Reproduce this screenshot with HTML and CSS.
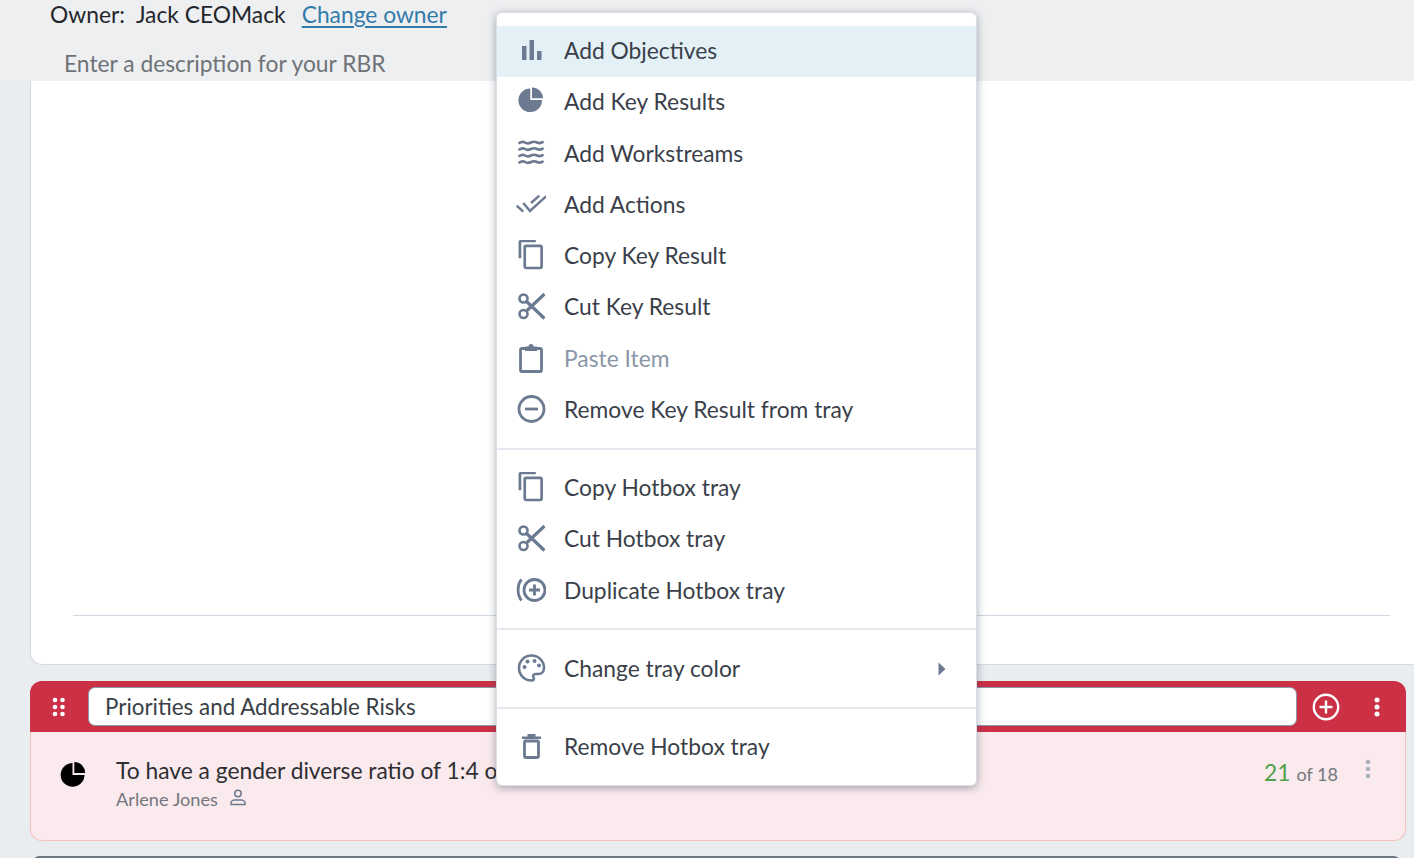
FILE: index.html
```html
<!DOCTYPE html>
<html lang="en">
<head>
<meta charset="utf-8">
<title>RBR</title>
<link rel="stylesheet" href="styles.css">
</head>
<body>
<svg class="defs" width="0" height="0" aria-hidden="true">
  <symbol id="i-copy" viewBox="0 0 28 32"><path d="M2.5 20V3.5a1.5 1.5 0 0 1 1.500-1.500H19" fill="none" stroke="currentColor" stroke-width="2.800"/><rect x="7.500" y="7" width="17.500" height="23" rx="1.500" fill="none" stroke="currentColor" stroke-width="2.800"/></symbol>
  <symbol id="i-cut" viewBox="0 0 28 28"><circle cx="6" cy="6.500" r="4" fill="none" stroke="currentColor" stroke-width="2.600"/><circle cx="6" cy="22" r="4" fill="none" stroke="currentColor" stroke-width="2.600"/><path d="M9 9.500 27 26.500M9 19 27 2" fill="none" stroke="currentColor" stroke-width="3.200"/></symbol>
</svg>

<header class="top">
  <div class="owner"><span>Owner:&nbsp; Jack CEOMack</span><a class="owner-link" href="#">Change owner</a></div>
  <div class="desc-label">Enter a description for your RBR</div>
</header>

<section class="panel"><div class="panel-rule"></div></section>

<section class="tray">
  <div class="tray-head">
    <svg class="grip" width="14" height="22" viewBox="0 0 14 22"><g fill="#fff"><circle cx="3" cy="4" r="2.300"/><circle cx="10.500" cy="4" r="2.300"/><circle cx="3" cy="11" r="2.300"/><circle cx="10.500" cy="11" r="2.300"/><circle cx="3" cy="18" r="2.300"/><circle cx="10.500" cy="18" r="2.300"/></g></svg>
    <div class="tray-input">Priorities and Addressable Risks</div>
    <svg class="tray-add" width="28" height="28" viewBox="0 0 28 28"><circle cx="14" cy="14" r="12.200" fill="none" stroke="#fff" stroke-width="2.400"/><path d="M14 7.500v13M7.500 14h13" stroke="#fff" stroke-width="2.400"/></svg>
    <svg class="tray-more" width="8" height="22" viewBox="0 0 8 22"><g fill="#fff"><circle cx="4" cy="4" r="2.500"/><circle cx="4" cy="11" r="2.500"/><circle cx="4" cy="18" r="2.500"/></g></svg>
  </div>
  <div class="tray-body">
    <svg class="kr-icon" width="26" height="26" viewBox="0 0 26 26"><path d="M12.500 2v12h12A11.900 11.900 0 1 1 12.500 2Z" fill="#000"/><path d="M14.300 1a10.800 10.800 0 0 1 10.800 11H14.300Z" fill="#000"/></svg>
    <div class="kr-text">
      <div class="kr-title">To have a gender diverse ratio of 1:4 or better</div>
      <div class="kr-owner"><span>Arlene Jones</span>
        <svg width="16" height="17" viewBox="0 0 16 17"><circle cx="8" cy="4.500" r="3.200" fill="none" stroke="#6b7a90" stroke-width="1.500"/><path d="M1 15.500v-1.500c0-2 2-3 3.500-3h7c1.500 0 3.500 1 3.500 3v1.500Z" fill="none" stroke="#6b7a90" stroke-width="1.500"/></svg>
      </div>
    </div>
    <div class="kr-score"><span class="kr-num">21</span><span class="kr-of">of 18</span></div>
    <svg class="kr-more" width="8" height="22" viewBox="0 0 8 22"><g fill="#a7b2bc"><circle cx="4" cy="4" r="2.300"/><circle cx="4" cy="11" r="2.300"/><circle cx="4" cy="18" r="2.300"/></g></svg>
  </div>
</section>
<div class="next-tray"></div>

<nav class="menu">
  <div class="menu-group">
    <div class="menu-item is-active"><svg class="mi" viewBox="0 0 30 30"><path d="M6 11h4.500v14H6zM13.500 5H18v20h-4.500zM21 16h4.500v9H21z" fill="currentColor"/></svg><span>Add Objectives</span></div>
    <div class="menu-item"><svg class="mi" viewBox="0 0 30 30"><path d="M14.300 2.500V14H26A11.800 11.800 0 1 1 14.300 2.500Z" fill="currentColor"/><path d="M16 1.500A11 11 0 0 1 27 12.200H16Z" fill="currentColor"/></svg><span>Add Key Results</span></div>
    <div class="menu-item"><svg class="mi" viewBox="0 0 30 30"><path d="M2.500 5.500c3-2 5-2 6.500-1s4 1 6 0 4-1 6 0 4 1 6.500-1M2.500 12c3-2 5-2 6.500-1s4 1 6 0 4-1 6 0 4 1 6.500-1M2.500 18.500c3-2 5-2 6.500-1s4 1 6 0 4-1 6 0 4 1 6.500-1M2.500 25c3-2 5-2 6.500-1s4 1 6 0 4-1 6 0 4 1 6.500-1" fill="none" stroke="currentColor" stroke-width="2.600"/></svg><span>Add Workstreams</span></div>
    <div class="menu-item"><svg class="mi" viewBox="0 0 30 30"><path d="M0.700 16.700 7.300 22.700M7.300 14 14 22 30 7.300M15 14 23.300 6.700" fill="none" stroke="currentColor" stroke-width="2.400"/></svg><span>Add Actions</span></div>
    <div class="menu-item"><svg class="mi" viewBox="0 0 30 30"><use href="#i-copy" x="1.500" y="-1" width="27" height="31"/></svg><span>Copy Key Result</span></div>
    <div class="menu-item"><svg class="mi" viewBox="0 0 30 30"><use href="#i-cut" x="1.500" y="1" width="28" height="28"/></svg><span>Cut Key Result</span></div>
    <div class="menu-item is-disabled"><svg class="mi" viewBox="0 0 30 30"><path d="M9 5.500H6a1.500 1.500 0 0 0-1.500 1.500v20A1.500 1.500 0 0 0 6 28.500h18a1.500 1.500 0 0 0 1.500-1.500V7A1.500 1.500 0 0 0 24 5.500h-3" fill="none" stroke="#6b7a90" stroke-width="2.800"/><path d="M9 3.500h3.500a2.500 2.500 0 0 1 5 0H21V8H9Z" fill="#6b7a90"/></svg><span>Paste Item</span></div>
    <div class="menu-item"><svg class="mi" viewBox="0 0 30 30"><circle cx="15.500" cy="15" r="12.500" fill="none" stroke="currentColor" stroke-width="2.800"/><path d="M9 15h13" stroke="currentColor" stroke-width="2.800"/></svg><span>Remove Key Result from tray</span></div>
  </div>
  <div class="menu-group menu-group-mid">
    <div class="menu-item"><svg class="mi" viewBox="0 0 30 30"><use href="#i-copy" x="1.500" y="-1" width="27" height="31"/></svg><span>Copy Hotbox tray</span></div>
    <div class="menu-item"><svg class="mi" viewBox="0 0 30 30"><use href="#i-cut" x="1.500" y="1" width="28" height="28"/></svg><span>Cut Hotbox tray</span></div>
    <div class="menu-item"><svg class="mi" viewBox="0 0 30 30"><path d="M5.500 4.500C1 10 1 20 5.500 25.500" fill="none" stroke="currentColor" stroke-width="2.800"/><circle cx="18.500" cy="15" r="10.500" fill="none" stroke="currentColor" stroke-width="2.800"/><path d="M18.500 9.500v11M13 15h11" stroke="currentColor" stroke-width="2.800"/></svg><span>Duplicate Hotbox tray</span></div>
  </div>
  <div class="menu-group menu-group-color">
    <div class="menu-item"><svg class="mi" viewBox="0 0 30 30"><path d="M15.500 2.500C8.500 2.500 3 8 3 15s5.500 12.500 12.500 12.500c2.500 0 2.800-2 2-3.200-1-1.600 0-3.300 2-3.300h3c3 0 5.500-2.500 5.500-6C28 8 22.500 2.500 15.500 2.500Z" fill="none" stroke="currentColor" stroke-width="2.600"/><g fill="currentColor"><circle cx="8.500" cy="14" r="2"/><circle cx="11.500" cy="8.500" r="2"/><circle cx="18.500" cy="8" r="2"/><circle cx="23" cy="12.500" r="2"/></g></svg><span class="menu-label">Change tray color</span><svg class="caret" width="8" height="14" viewBox="0 0 8 14"><path d="M0.500 0.500 7.500 7 0.500 13.500Z" fill="#6b7a90"/></svg></div>
  </div>
  <div class="menu-group">
    <div class="menu-item"><svg class="mi" viewBox="0 0 30 30"><path d="M6 5.500h19v2.500H6zM11.500 3h8v2.500h-8z" fill="currentColor"/><rect x="8.500" y="10" width="14" height="16.500" rx="1" fill="none" stroke="currentColor" stroke-width="2.800"/></svg><span>Remove Hotbox tray</span></div>
  </div>
</nav>
</body>
</html>
```

FILE: styles.css
```css
* { box-sizing: border-box; }
html, body { margin: 0; height: 858px; overflow: hidden; }
body {
  position: relative;
  width: 1414px;
  background: #e9edf0;
  font-family: Lato, "Open Sans", sans-serif;
  color: #2b2f36;
}
.defs { position: absolute; }

.top {
  height: 81px;
  background: #eeeff1;
  padding-left: 50px;
  font-size: 22.8px;
  line-height: 30px;
}
.owner { display: flex; gap: 16px; line-height: 28px; color: #23262b; }
.owner-link { color: #337ba9; text-decoration: underline; text-underline-offset: 3px; }
.desc-label { margin: 20px 0 0 14px; line-height: 30px; color: #6f7378; }

.panel {
  position: relative;
  margin-left: 30px;
  height: 584px;
  background: #fff;
  border: 1px solid #d5dae4;
  border-top: 0;
  border-right: 0;
  border-radius: 0 0 0 12px;
  padding: 534px 24px 0 42px;
}
.panel-rule { height: 1px; background: #d2d7e3; }

.tray {
  margin: 16px 8px 0 30px;
  height: 160px;
  display: flex;
  flex-direction: column;
}
.tray-head {
  height: 51px;
  flex: none;
  background: #cb3044;
  border-radius: 12px 12px 0 0;
  display: flex;
  align-items: center;
  padding: 0 20px 0 22px;
}
.grip { margin-right: 22px; flex: none; }
.tray-input {
  width: 1209px;
  flex: none;
  height: 39px;
  background: #fff;
  border: 1px solid #8a97a8;
  border-radius: 7px;
  padding-left: 16px;
  font-size: 22.4px;
  line-height: 37px;
  color: #3a3f47;
}
.tray-add { margin-left: 15px; flex: none; }
.tray-more { margin-left: 33px; flex: none; }
.tray-body {
  flex: 1;
  display: flex;
  background: #faeaed;
  border: 1px solid #f5c3bb;
  border-top: 0;
  border-radius: 0 0 12px 12px;
  padding: 25px 0 0 29px;
  position: relative;
}
.kr-icon { margin-top: 4px; flex: none; }
.kr-text { margin-left: 30px; flex: 1; }
.kr-title { font-size: 22.8px; line-height: 27px; color: #2d2f33; }
.kr-owner { display: flex; align-items: center; gap: 12px; font-size: 18.2px; line-height: 24px; color: #74777d; margin-top: 3px; }
.kr-owner svg { margin-top: -4px; }
.kr-score { display: flex; align-items: baseline; gap: 6px; height: 30px; margin-right: 26px; margin-top: 1px; }
.kr-num { font-size: 22.8px; color: #52a04a; }
.kr-of { font-size: 18px; color: #74777d; }
.kr-more { margin-right: 33px; flex: none; margin-top: 1px; }

.next-tray {
  margin: 15px 14px 0 33px;
  height: 6px;
  background: #e9edf0;
  border-top: 2px solid #6f7880;
  border-radius: 8px 8px 0 0;
}

.menu {
  position: absolute;
  left: 496px;
  top: 12px;
  width: 481px;
  height: 774px;
  background: #fff;
  border: 1px solid #d9dee7;
  border-radius: 6px;
  box-shadow: 0 2px 8px rgba(60, 70, 90, 0.45);
  padding-top: 13px;
  display: flex;
  flex-direction: column;
}
.menu-group { padding-bottom: 12px; }
.menu-group + .menu-group { border-top: 2px solid #e3e7ee; padding-top: 13px; }
.menu-group-mid { padding-bottom: 11px; }
.menu-group + .menu-group-color { padding-top: 14px; }
.menu-item {
  display: flex;
  align-items: center;
  height: 51.25px;
  padding: 0 0 3px 19px;
  font-size: 22.8px;
  color: #6b7a90;
}
.menu-item span { color: #3a3f4a; margin-left: 18px; }
.menu-item.is-active { background: #e3f0f6; }
.menu-item.is-disabled span { color: #8a96a8; }
.menu-label { flex: 1; }
.caret { margin: 3px 30px 0 0; }
.mi { width: 30px; height: 30px; flex: none; }
```
